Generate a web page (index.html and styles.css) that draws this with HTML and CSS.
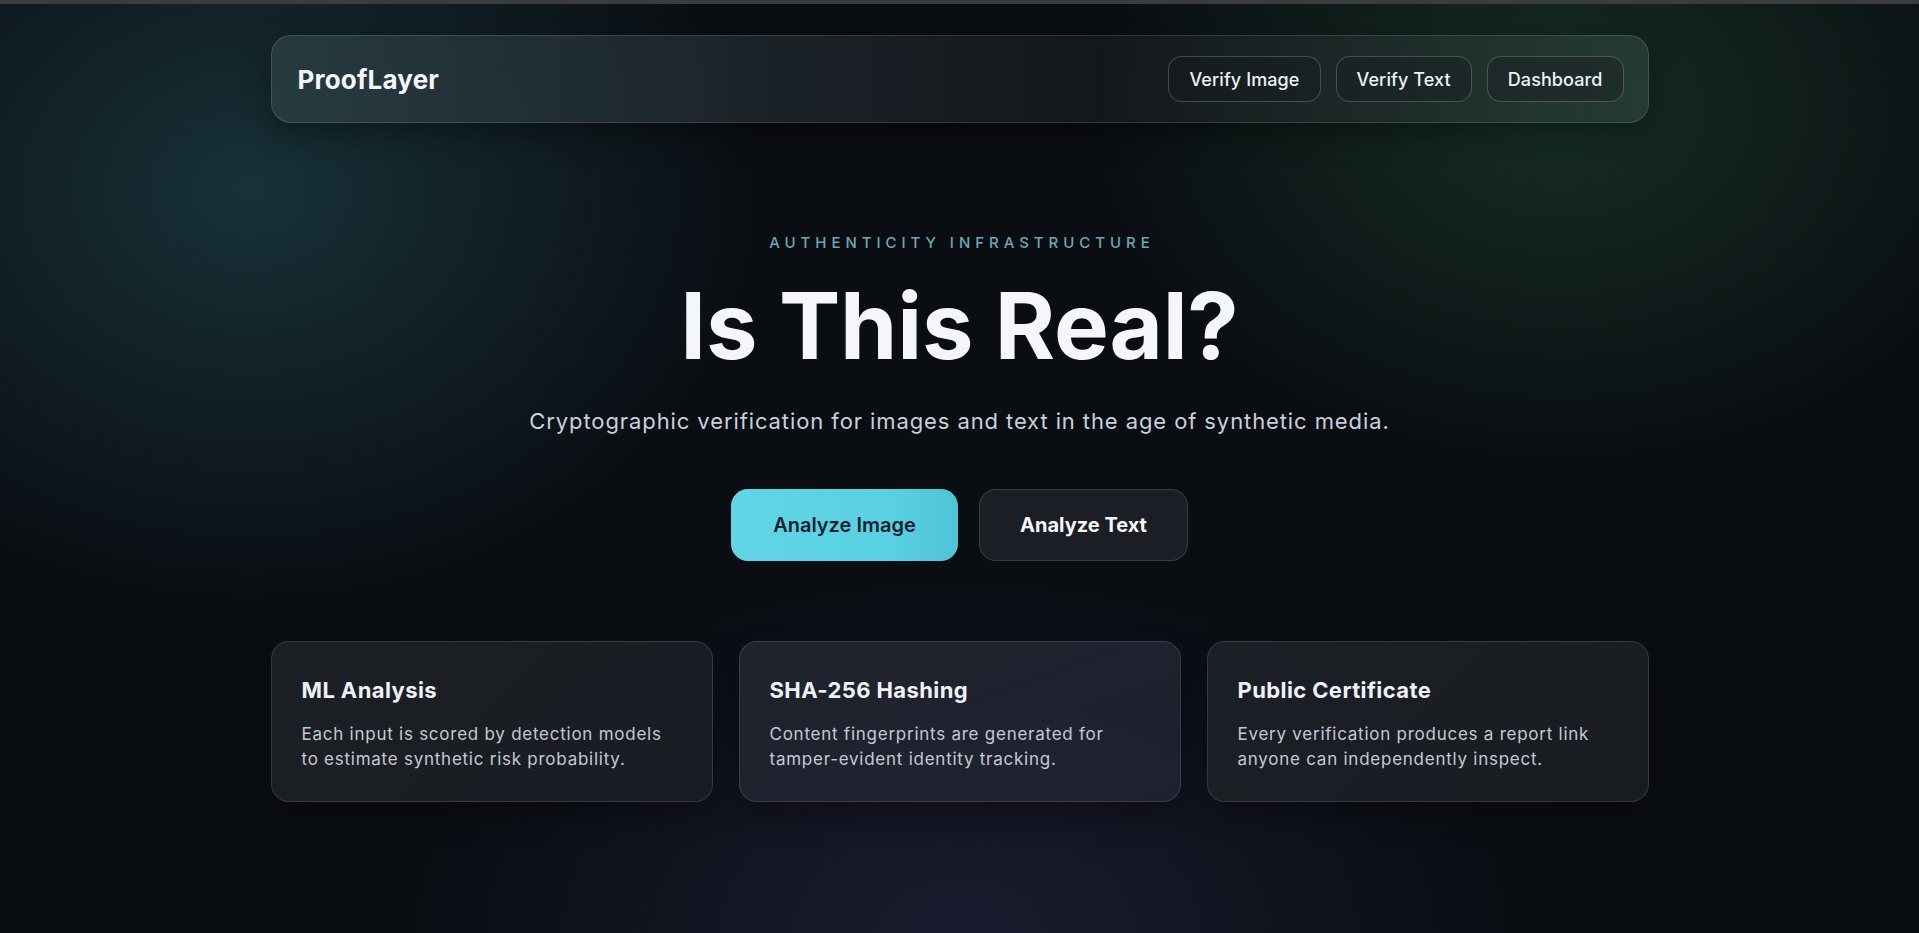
FILE: index.html
```html
<!DOCTYPE html>
<html lang="en">
<head>
<meta charset="utf-8">
<title>ProofLayer</title>
<link rel="stylesheet" href="styles.css">
</head>
<body>
<div class="topstrip"></div>
<div class="page">
  <header class="nav">
    <div class="logo">ProofLayer</div>
    <nav class="nav-links">
      <a class="nav-btn" href="#">Verify Image</a>
      <a class="nav-btn" href="#">Verify Text</a>
      <a class="nav-btn" href="#">Dashboard</a>
    </nav>
  </header>

  <section class="hero">
    <p class="eyebrow">AUTHENTICITY INFRASTRUCTURE</p>
    <h1 class="headline">Is This Real?</h1>
    <p class="subtitle">Cryptographic verification for images and text in the age of synthetic media.</p>
    <div class="actions">
      <a class="btn btn-primary" href="#">Analyze Image</a>
      <a class="btn btn-secondary" href="#">Analyze Text</a>
    </div>
  </section>

  <section class="features">
    <article class="card">
      <h3 class="card-title">ML Analysis</h3>
      <p class="card-text">Each input is scored by detection models to estimate synthetic risk probability.</p>
    </article>
    <article class="card card-mid">
      <h3 class="card-title">SHA-256 Hashing</h3>
      <p class="card-text">Content fingerprints are generated for tamper-evident identity tracking.</p>
    </article>
    <article class="card">
      <h3 class="card-title">Public Certificate</h3>
      <p class="card-text">Every verification produces a report link anyone can independently inspect.</p>
    </article>
  </section>
</div>
</body>
</html>
```

FILE: styles.css
```css
* { box-sizing: border-box; }

html, body {
  margin: 0;
  height: 100%;
}

body {
  font-family: Inter, "Noto Sans", sans-serif;
  color: #eef2f8;
  background-color: #0a0d12;
  background-image:
    radial-gradient(ellipse 520px 420px at 250px 190px, rgba(28, 62, 68, 0.75), rgba(28, 62, 68, 0) 100%),
    radial-gradient(ellipse 480px 360px at 1560px 110px, rgba(26, 56, 42, 0.75), rgba(26, 56, 42, 0) 100%),
    radial-gradient(ellipse 560px 360px at 960px 933px, rgba(34, 34, 60, 0.7), rgba(34, 34, 60, 0) 100%);
  overflow: hidden;
  -webkit-font-smoothing: antialiased;
}

.topstrip {
  height: 4px;
  background: #3b3c3e;
}

.page {
  width: 1378px;
  margin: 0 auto;
  padding-top: 31px;
}

/* Nav */
.nav {
  height: 88px;
  display: flex;
  align-items: center;
  justify-content: space-between;
  padding: 0 24px 0 26px;
  border: 1px solid rgba(255, 255, 255, 0.13);
  border-radius: 20px;
  background: linear-gradient(90deg, rgba(42, 62, 68, 0.85) 0%, rgba(30, 38, 44, 0.8) 40%, rgba(22, 26, 30, 0.8) 60%, rgba(40, 62, 56, 0.85) 100%);
  box-shadow: 0 10px 30px rgba(0, 0, 0, 0.35);
}

.logo {
  font-size: 26px;
  font-weight: 700;
  letter-spacing: 0.2px;
  color: #f3f6fa;
}

.nav-links {
  display: flex;
  gap: 15px;
}

.nav-btn {
  display: inline-flex;
  align-items: center;
  justify-content: center;
  height: 46px;
  padding: 0 20px;
  border: 1px solid rgba(255, 255, 255, 0.2);
  border-radius: 14px;
  background: rgba(20, 26, 30, 0.35);
  color: #eef2f6;
  font-size: 18px;
  font-weight: 500;
  letter-spacing: 0.1px;
  text-decoration: none;
}

/* Hero */
.hero {
  text-align: center;
  padding-top: 110px;
}

.eyebrow {
  margin: 0;
  font-size: 15px;
  line-height: 20px;
  letter-spacing: 0.33em;
  font-weight: 500;
  color: #6aa9b2;
  padding-left: 0.33em;
}

.headline {
  margin: 22px 0 0;
  font-size: 92px;
  line-height: 101px;
  font-weight: 700;
  letter-spacing: -0.2px;
  color: #f4f6fc;
}

.subtitle {
  margin: 29px 0 0;
  font-size: 22px;
  line-height: 32px;
  letter-spacing: 0.9px;
  color: #c9d1dc;
}

.actions {
  display: flex;
  justify-content: center;
  gap: 21px;
  margin-top: 52px;
}

.btn {
  display: inline-flex;
  align-items: center;
  justify-content: center;
  height: 72px;
  border-radius: 17px;
  font-size: 20px;
  text-decoration: none;
}

.btn-primary {
  width: 227px;
  background: linear-gradient(90deg, #5fd5e5 0%, #5ad1e2 70%, #4ec4d5 100%);
  color: #12212e;
  font-weight: 600;
}

.btn-secondary {
  width: 209px;
  background: #1b1e24;
  border: 1px solid rgba(255, 255, 255, 0.14);
  color: #f5f7fa;
  font-weight: 700;
}

/* Features */
.features {
  display: grid;
  grid-template-columns: repeat(3, 1fr);
  gap: 26px;
  margin-top: 80px;
}

.card {
  height: 161px;
  padding: 33px 30px 0 30px;
  border: 1px solid rgba(255, 255, 255, 0.12);
  border-radius: 18px;
  background: linear-gradient(135deg, rgba(30, 33, 38, 0.95), rgba(26, 29, 35, 0.95));
  box-shadow: 0 14px 30px rgba(0, 0, 0, 0.3);
}

.card-mid {
  background: linear-gradient(160deg, rgba(34, 37, 46, 0.95), rgba(32, 34, 50, 0.95));
}

.card-title {
  margin: 0;
  font-size: 22px;
  line-height: 30px;
  font-weight: 700;
  letter-spacing: 0.4px;
  color: #eef2f8;
}

.card-text {
  margin: 17px 0 0;
  font-size: 17px;
  line-height: 25px;
  letter-spacing: 0.75px;
  color: #c3cad5;
}
```
